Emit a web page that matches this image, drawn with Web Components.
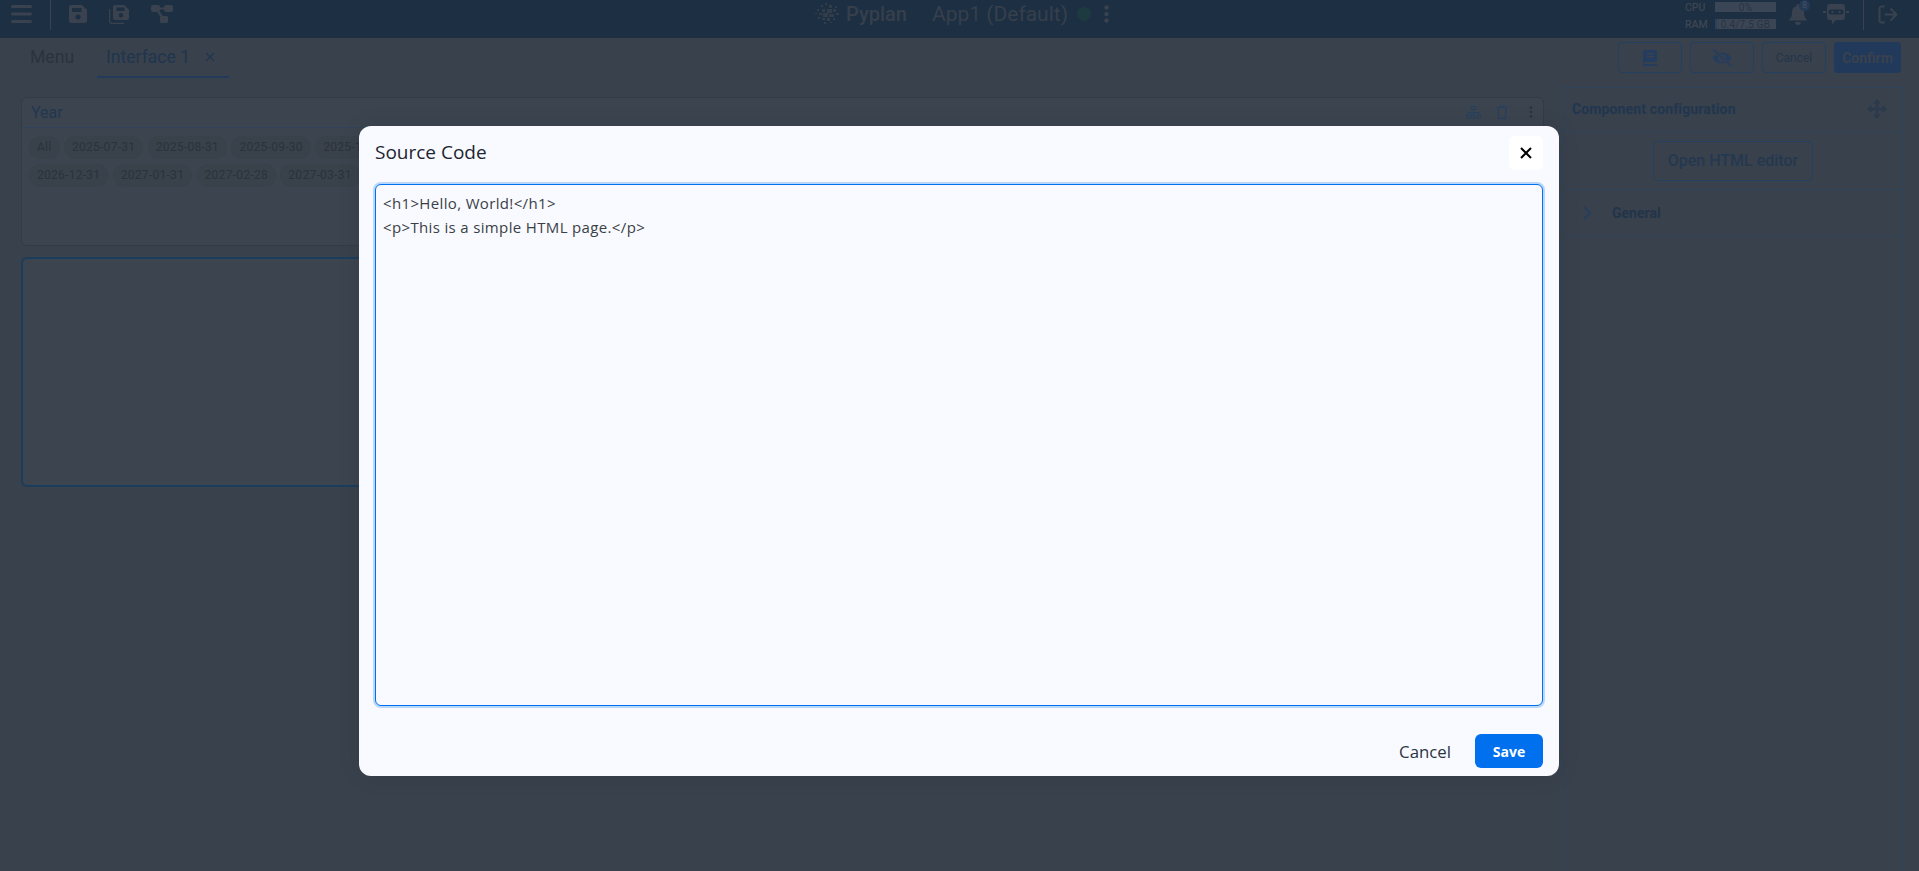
<!DOCTYPE html>
<html lang="en"><head><meta charset="utf-8"><title>Source Code</title>
<style>
html,body{margin:0;padding:0;height:100%;overflow:hidden;background:#39414c;font-family:Roboto,"Liberation Sans",sans-serif}
</style></head><body>
<pyplan-app></pyplan-app>
<script>
const def=(name,html)=>customElements.define(name,class extends HTMLElement{constructor(){super();this.attachShadow({mode:'open'}).innerHTML=html;}});
def('app-header',`<style>
:host{display:flex;height:38px;background:#1d2f43;color:#363f4b;align-items:flex-start;box-sizing:border-box;position:relative}
svg{display:block}
.left{display:flex;align-items:center;height:28px;flex:0 0 auto}
.menu{margin-left:11px}
.sep{width:1px;height:30px;background:#39424e;flex:none}
.left .sep{margin-top:2px}
.mid{position:absolute;left:815px;top:0;height:28px;display:flex;align-items:center}
.py{font-size:20px;font-weight:500;margin-left:6px;width:60px;white-space:nowrap}
.app{font-size:21px;margin-left:26px;white-space:nowrap}
.dot{width:14px;height:14px;border-radius:50%;background:#1d3a40;margin-left:9px;flex:none}
.right{margin-left:auto;display:flex;height:30px;align-items:flex-start;margin-right:21px}
.stats{display:grid;grid-template-columns:30px 61px;grid-template-rows:10px 10px;row-gap:7px;margin-top:2px;font-size:10.5px;font-weight:500;line-height:11px;color:#3c4551}
.bar{background:#3a4656;color:#2a333e;text-align:center;font-weight:400;font-size:10px;line-height:11px;position:relative;letter-spacing:.2px}
.bar i{position:absolute;left:0;top:0;bottom:0;width:2px;background:#27415f}
.bell{position:relative;margin-left:12px;margin-top:4px}
.badge{position:absolute;left:11px;top:-4px;width:11px;height:11px;line-height:11px;border-radius:50%;background:#233a57;color:#465060;font-size:9px;text-align:center}
</style>
<div class="left">
<svg class="menu" width="21" height="18" viewBox="0 0 21 18"><g fill="#39424e"><rect y="0" width="21" height="3" rx="1.500"/><rect y="7.500" width="21" height="3" rx="1.500"/><rect y="15" width="21" height="3" rx="1.500"/></g></svg>
<span class="sep" style="margin-left:18px"></span>
<svg style="margin-left:18px" width="18" height="18" viewBox="0 0 18 18"><path fill="#39424e" fill-rule="evenodd" d="M2.500 0H13l5 5v10.500a2.500 2.500 0 0 1-2.500 2.500h-13A2.500 2.500 0 0 1 0 15.500v-13A2.500 2.500 0 0 1 2.500 0ZM3 3v4h9.500V3ZM9 9.500a2.500 2.500 0 1 0 0 5 2.500 2.500 0 0 0 0-5Z"/></svg>
<svg style="margin-left:22px" width="20" height="19" viewBox="0 0 20 19"><path fill="#39424e" fill-rule="evenodd" d="M6 0h9l5 4.500V13a2 2 0 0 1-2 2H6a2 2 0 0 1-2-2V2a2 2 0 0 1 2-2Zm1.500 2.500v3.500h8V2.500Zm4.500 5.500a2.200 2.200 0 1 0 0 4.400 2.200 2.200 0 0 0 0-4.400Z"/><path fill="none" stroke="#39424e" stroke-width="1.300" d="M.7 4v12a2.500 2.500 0 0 0 2.500 2.500H15"/></svg>
<svg style="margin-left:22px" width="22" height="18" viewBox="0 0 22 18"><g fill="#39424e"><rect x="0" y="0" width="9" height="7" rx="2"/><rect x="13" y="0" width="9" height="7" rx="2"/><rect x="9" y="11" width="8" height="7" rx="1.500"/><path d="M7 2.500h8v2H7Z"/><path d="m5.500 6 2-1.200 5.500 8-2.200 1.200Z"/></g></svg>
</div>
<div class="mid">
<svg width="25" height="24" viewBox="0 0 25 24"><g fill="#333d4a"><rect x="10" y="1" width="2" height="2"/><rect x="6" y="3" width="2" height="2"/><rect x="14" y="3" width="3" height="3"/><rect x="20" y="4" width="2" height="2"/><rect x="2" y="7" width="2" height="2"/><rect x="7" y="7" width="3" height="3"/><rect x="12" y="7" width="5" height="4"/><rect x="18" y="7" width="3" height="3"/><rect x="0" y="11" width="2" height="1"/><rect x="4" y="11" width="3" height="2"/><rect x="8" y="11" width="5" height="4"/><rect x="14" y="12" width="5" height="3"/><rect x="21" y="11" width="3" height="2"/><rect x="3" y="15" width="2" height="2"/><rect x="7" y="16" width="3" height="2"/><rect x="12" y="16" width="3" height="3"/><rect x="18" y="16" width="2" height="2"/><rect x="9" y="20" width="2" height="2"/><rect x="15" y="20" width="2" height="1"/></g></svg>
<span class="py">Pyplan</span><span class="app">App1 (Default)</span><span class="dot"></span>
<svg style="margin-left:13px" width="5" height="18" viewBox="0 0 5 18"><g fill="#39424e"><circle cx="2.500" cy="2.500" r="2.200"/><circle cx="2.500" cy="9" r="2.200"/><circle cx="2.500" cy="15.500" r="2.200"/></g></svg>
</div>
<div class="right">
<div class="stats"><span>CPU</span><span class="bar">0%</span><span>RAM</span><span class="bar"><i></i>0.4/7.5 GB</span></div>
<div class="bell"><svg width="20" height="21" viewBox="0 0 20 21"><path fill="#39424e" d="M10 0a1.500 1.500 0 0 1 1.500 1.500v.7A6 6 0 0 1 16 8c0 4 .8 5.500 3.500 8.500H.5C3.200 13.500 4 12 4 8a6 6 0 0 1 4.500-5.800v-.7A1.500 1.500 0 0 1 10 0ZM7 18h6a3 3 0 0 1-6 0Z"/></svg><span class="badge">8</span></div>
<svg style="margin-left:15px;margin-top:4px" width="26" height="21" viewBox="0 0 26 21"><path fill="#39424e" fill-rule="evenodd" d="M7 0h12a3 3 0 0 1 3 3v10a3 3 0 0 1-3 3h-6l-4 4.500V16H7a3 3 0 0 1-3-3V3a3 3 0 0 1 3-3Zm1 5.500a2.500 2.500 0 1 0 0 5h10a2.500 2.500 0 1 0 0-5Z"/><rect x="0" y="7" width="3" height="2" fill="#39424e"/><rect x="23" y="7" width="3" height="2" fill="#39424e"/><rect x="8.500" y="7" width="2" height="2" fill="#39424e"/><rect x="15.500" y="7" width="2" height="2" fill="#39424e"/></svg>
<span class="sep" style="margin-left:14px"></span>
<svg style="margin-left:14px;margin-top:5px" width="20" height="19" viewBox="0 0 20 19"><path fill="none" stroke="#39424e" stroke-width="2" stroke-linecap="round" stroke-linejoin="round" d="M6 1.500H3.500A2 2 0 0 0 1.500 3.500v12a2 2 0 0 0 2 2H6M7.500 9.500H18.500M13 4l5.500 5.500L13 15"/></svg>
</div>`);
def('tab-bar',`<style>
:host{display:flex;height:40px;box-sizing:border-box;padding-left:30px;padding-right:18px;position:relative}
.tabs{display:flex;align-items:flex-start}
.t{font-size:17.6px;line-height:20px;white-space:nowrap}
.menu{color:#2a333e;width:67px;margin-top:9px}
.cur{color:#20354e;width:132px;border-bottom:2px solid #223b5a;display:flex;align-items:flex-start;padding-top:9px;height:29px}
.cur span{margin-left:9px}
.cur svg{margin-left:15px;margin-top:5px}
.acts{margin-left:auto;display:flex;gap:8px;padding-top:4px;height:31px}
.b{width:64px;height:31px;box-sizing:border-box;border:1px solid #234060;border-radius:4px;display:flex;align-items:center;justify-content:center;color:#243549;font-size:12px}
.b.c{background:#21395a;border:0;width:67px;color:#39424e;font-size:14px;font-weight:700}
</style>
<div class="tabs"><span class="t menu">Menu</span><div class="t cur"><span>Interface 1</span><svg width="10" height="10" viewBox="0 0 10 10"><path stroke="#20354e" stroke-width="1.200" d="M1 1l8 8M9 1l-8 8"/></svg></div></div>
<div class="acts">
<div class="b"><svg width="14" height="16" viewBox="0 0 14 16"><path fill="#243d5e" fill-rule="evenodd" d="M2 0h12v12H2a1 1 0 0 0 0 2h12v2H2a2 2 0 0 1-2-2V2a2 2 0 0 1 2-2Zm2 3v1.500h7V3Zm0 3v1.500h7V6Z"/></svg></div>
<div class="b"><svg width="20" height="18" viewBox="0 0 20 18"><path fill="#243d5e" fill-rule="evenodd" d="M10 3.500c4.500 0 8 3 9.500 5.500-1.500 2.500-5 5.500-9.500 5.500S2 11.500.5 9C2 6.500 5.500 3.500 10 3.500Zm0 1.800a3.700 3.700 0 1 0 0 7.400 3.700 3.700 0 0 0 0-7.400Z"/><circle cx="10" cy="9" r="2" fill="#243d5e"/><path stroke="#39414c" stroke-width="3.400" d="M1.500 .5 19.500 17.500"/><path stroke="#243d5e" stroke-width="1.500" d="M1 0 19 17"/></svg></div>
<div class="b">Cancel</div><div class="b c">Confirm</div></div>`);
def('chip-item',`<style>:host{display:block;flex:none;height:23px;line-height:23px;padding:0 8px;border-radius:12px;background:#39414b;color:#2a323c;font-size:12px;letter-spacing:.28px;white-space:nowrap}</style><slot></slot>`);
def('chip-row',`<style>:host{display:flex;gap:4.400px;flex-wrap:nowrap}</style><slot></slot>`);
def('filter-card',`<style>
:host{display:block;height:149px;box-sizing:border-box;border:1px solid #323c49;border-radius:6px;background:#3b444f;overflow:hidden}
.h{height:28px;padding:0 9px 1px;border-bottom:1px solid #30435a;display:flex;align-items:center;color:#223750;font-size:16px}
.ic{margin-left:auto;display:flex;align-items:center;padding-right:1px}
svg{display:block}
.c{padding:8px 7px;display:flex;flex-direction:column;gap:5px}
</style>
<div class="h"><span>Year</span><div class="ic">
<svg width="15" height="13" viewBox="0 0 15 13"><g fill="none" stroke="#26405e"><rect x="5.500" y=".5" width="4" height="3"/><rect x=".5" y="9" width="3" height="3"/><rect x="5.500" y="9" width="4" height="3"/><rect x="11.500" y="9" width="3" height="3"/><path d="M7.500 3.600V9M2 9V6.500h11V9"/></g></svg>
<svg style="margin-left:15px" width="12" height="14" viewBox="0 0 12 14"><path fill="none" stroke="#26405e" stroke-width="1.200" d="M.5 2.500h11M4 2.500V1h4v1.500M2 2.500l.7 10.800h6.600L10 2.500"/></svg>
<svg style="margin-left:21px" width="4" height="12" viewBox="0 0 4 12"><g fill="#2a323c"><circle cx="2" cy="1.500" r="1.300"/><circle cx="2" cy="6" r="1.300"/><circle cx="2" cy="10.500" r="1.300"/></g></svg>
</div></div>
<div class="c"><slot></slot></div>`);
def('html-box',`<style>:host{display:block;height:230px;box-sizing:border-box;border:2px solid #1c3c5c;border-radius:6px;background:#3b444f}</style>`);
def('config-panel',`<style>
:host{display:block;box-sizing:border-box;border:1px solid #2e4258;border-bottom:0;color:#21364f;height:100%}
.h{height:41px;padding:0 15px 2px 8px;display:flex;align-items:center;font-size:14px;font-weight:700;letter-spacing:.13px;border-bottom:1px solid #2e4258}
.h svg{margin-left:auto}
.o{height:57px;display:flex;align-items:center;justify-content:center;border-bottom:1px solid #2e4258}
.btn{width:160px;height:40px;box-sizing:border-box;border:1px solid #254060;border-radius:4px;display:flex;align-items:center;justify-content:center;font-size:16px;font-weight:500;color:#243850}
.g{height:46px;display:flex;align-items:center;border-bottom:1px solid #2e4258;padding-left:19px;font-size:14px;font-weight:700;color:#22344a}
.g span{margin-left:20px}
</style>
<div class="h"><span>Component configuration</span><svg width="20" height="20" viewBox="0 0 20 20"><path fill="none" stroke="#2b3a4c" stroke-width="2.400" d="M10 3v14M3 10h14"/><path fill="#2b3a4c" d="M10 0l4 4.500H6ZM10 20l-4-4.500h8ZM0 10l4.500-4v8ZM20 10l-4.500 4V6Z"/></svg></div>
<div class="o"><div class="btn">Open HTML editor</div></div>
<div class="g"><svg width="9" height="14" viewBox="0 0 9 14"><path fill="none" stroke="#25405f" stroke-width="2" d="M1 1l6 6-6 6"/></svg><span>General</span></div>`);
def('source-modal',`<style>
:host{position:absolute;left:359px;top:126px;width:1200px;height:650px;box-sizing:border-box;background:#f9faff;border-radius:12px;display:flex;flex-direction:column;padding:0 16px;font-family:"Open Sans","Noto Sans",sans-serif;box-shadow:0 0 24px rgba(0,0,0,.08)}
.h{height:58px;box-sizing:border-box;padding-bottom:6px;display:flex;align-items:center}
.title{font-size:19px;color:#1c2530}
.x{margin-left:auto;width:34px;height:34px;border-radius:6px;background:#fff;display:flex;align-items:center;justify-content:center;margin-top:2px}
.ta{height:522px;box-sizing:border-box;border:1px solid #0070ee;border-radius:6px;box-shadow:0 0 0 2px #b9d7fb;padding:6px 7px;font-size:15px;letter-spacing:.35px;line-height:24px;color:#3a3f45;white-space:pre;background:#f9faff}
.f{display:flex;justify-content:flex-end;align-items:center;margin-top:28px}
.cancel{font-size:16.800px;color:#2a3442}
.save{margin-left:24px;width:68px;height:34px;border-radius:6px;background:#0070ee;color:#fff;font-weight:700;font-size:14px;display:flex;align-items:center;justify-content:center}
</style>
<div class="h"><span class="title">Source Code</span><div class="x"><svg width="12" height="12" viewBox="0 0 12 12"><path stroke="#000" stroke-width="2" d="M1 1l10 10M11 1 1 11"/></svg></div></div>
<div class="ta">&lt;h1&gt;Hello, World!&lt;/h1&gt;
&lt;p&gt;This is a simple HTML page.&lt;/p&gt;</div>
<div class="f"><span class="cancel">Cancel</span><span class="save">Save</span></div>`);
def('pyplan-app',`<style>
:host{display:flex;flex-direction:column;height:871px;width:1919px;position:relative;overflow:hidden;background:#39414c}
main{flex:1;display:grid;grid-template-columns:1fr 340px;column-gap:19px;padding:9px 16px 0 21px;min-height:0}
.l{display:flex;flex-direction:column;gap:11px;padding-top:10px}
</style>
<app-header></app-header><tab-bar></tab-bar>
<main><div class="l"><filter-card>
<chip-row><chip-item>All</chip-item><chip-item>2025-07-31</chip-item><chip-item>2025-08-31</chip-item><chip-item>2025-09-30</chip-item><chip-item>2025-10-31</chip-item></chip-row>
<chip-row><chip-item>2026-12-31</chip-item><chip-item>2027-01-31</chip-item><chip-item>2027-02-28</chip-item><chip-item>2027-03-31</chip-item></chip-row>
</filter-card><html-box></html-box></div><config-panel></config-panel></main>
<source-modal></source-modal>`);
</script></body></html>
